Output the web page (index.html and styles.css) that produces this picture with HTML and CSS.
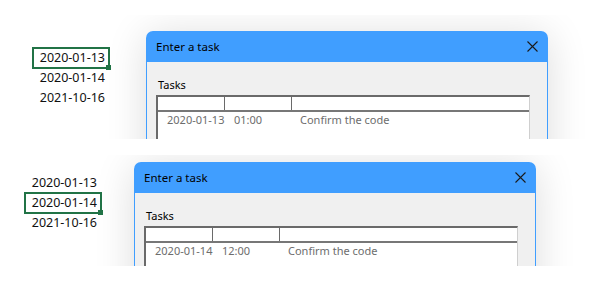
FILE: index.html
```html
<!DOCTYPE html>
<html lang="en">
<head>
  <meta charset="UTF-8" />
  <meta name="viewport" content="width=device-width, initial-scale=1.0" />
  <title>Enter a task</title>
  <link rel="stylesheet" href="styles.css">
</head>
<body>
  <!-- first shot: first date selected -->
  <div class="panel panel-first">
    <div class="cells">
      <div class="cell selected">2020-01-13</div>
      <div class="cell">2020-01-14</div>
      <div class="cell">2021-10-16</div>
    </div>

    <div class="dialog">
      <div class="titlebar">
        <span class="title">Enter a task</span>
        <svg class="close" width="11" height="11" viewBox="0 0 11 11">
          <path d="M0.5 0.5 L10.5 10.5 M10.5 0.5 L0.5 10.5" stroke="#1b1b1b" stroke-width="1.1" fill="none" />
        </svg>
      </div>
      <div class="dialog-body">
        <div class="label">Tasks</div>
        <div class="task-table">
          <div class="task-head">
            <div class="col"></div>
            <div class="col"></div>
            <div class="col last"></div>
          </div>
          <div class="task-row">
            <div class="col">2020-01-13</div>
            <div class="col">01:00</div>
            <div class="col">Confirm the code</div>
          </div>
        </div>
      </div>
    </div>
  </div>

  <!-- second shot: second date selected -->
  <div class="panel panel-second">
    <div class="cells">
      <div class="cell">2020-01-13</div>
      <div class="cell selected">2020-01-14</div>
      <div class="cell">2021-10-16</div>
    </div>

    <div class="dialog">
      <div class="titlebar">
        <span class="title">Enter a task</span>
        <svg class="close" width="11" height="11" viewBox="0 0 11 11">
          <path d="M0.5 0.5 L10.5 10.5 M10.5 0.5 L0.5 10.5" stroke="#1b1b1b" stroke-width="1.1" fill="none" />
        </svg>
      </div>
      <div class="dialog-body">
        <div class="label">Tasks</div>
        <div class="task-table">
          <div class="task-head">
            <div class="col"></div>
            <div class="col"></div>
            <div class="col last"></div>
          </div>
          <div class="task-row">
            <div class="col">2020-01-14</div>
            <div class="col">12:00</div>
            <div class="col">Confirm the code</div>
          </div>
        </div>
      </div>
    </div>
  </div>
</body>
</html>
```

FILE: styles.css
```css
* {
  box-sizing: border-box;
}

body {
  margin: 0;
  background: #fff;
  font-family: "Noto Sans", "Open Sans", sans-serif;
  color: #000;
}

.panel {
  display: flex;
  align-items: flex-start;
  overflow: hidden;
}

.panel-first {
  margin-top: 15px;
  height: 124px;
}

.panel-second {
  margin-top: 16px;
  height: 111px;
}

/* spreadsheet cells */
.cells {
  width: 76px;
  flex-shrink: 0;
}

.panel-first .cells {
  margin: 33px 0 0 33px;
}

.panel-second .cells {
  margin: 18px 0 0 25px;
}

.cell {
  position: relative;
  height: 20px;
  line-height: 20px;
  padding-right: 4px;
  text-align: right;
  font-size: 12.5px;
  color: #111;
}

.cell.selected::before {
  content: "";
  position: absolute;
  top: -1px;
  left: -1px;
  right: -1px;
  bottom: -1px;
  border: 2px solid #217346;
}

.cell.selected::after {
  content: "";
  position: absolute;
  right: -2px;
  bottom: -2px;
  width: 5px;
  height: 5px;
  background: #217346;
}

/* dialog window */
.dialog {
  width: 402px;
  flex-shrink: 0;
  border-radius: 7px 7px 0 0;
  box-shadow: 0 4px 40px rgba(0, 0, 0, 0.14);
}

.panel-first .dialog {
  margin: 16px 0 0 37px;
}

.panel-second .dialog {
  margin: 7px 0 0 33px;
}

.titlebar {
  height: 31px;
  display: flex;
  align-items: center;
  justify-content: space-between;
  padding: 0 10px 0 10px;
  background: #409eff;
  border-radius: 7px 7px 0 0;
}

.title {
  font-size: 11.5px;
  color: #000;
}

.close {
  display: block;
}

.dialog-body {
  background: #f0f0f0;
  border-left: 1px solid #409eff;
  border-right: 1px solid #409eff;
  padding: 16px 0 40px 9px;
}

.label {
  padding-left: 2px;
  font-size: 11px;
  line-height: 14px;
  margin-bottom: 3px;
}

.task-table {
  width: 374px;
  min-height: 70px;
  background: #fff;
  border-top: 2px solid #6a6a6a;
  border-left: 2px solid #6a6a6a;
  border-right: 1px solid #cfcfcf;
}

.task-head,
.task-row {
  display: grid;
  grid-template-columns: 67px 67px 1fr;
}

.task-head {
  height: 15px;
  border-bottom: 2px solid #777;
}

.task-head .col {
  border-right: 1px solid #6a6a6a;
}

.task-head .col.last {
  border-right: none;
}

.task-row .col {
  padding-left: 9px;
  font-size: 11px;
  line-height: 15px;
  color: #6d6d6d;
  white-space: nowrap;
}

.task-row .col:last-child {
  padding-left: 8px;
}
```
